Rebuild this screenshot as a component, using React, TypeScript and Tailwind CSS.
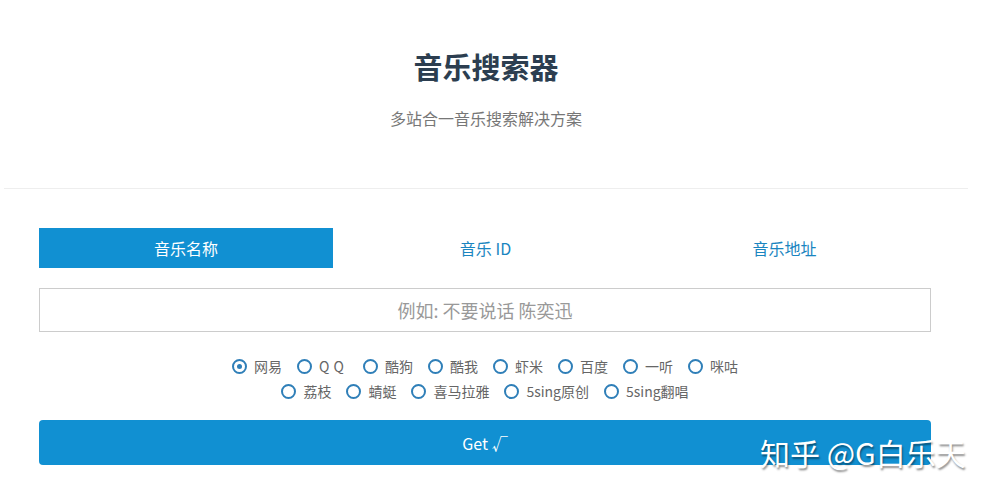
import { useState } from 'react'

const rowOne = ['网易', 'QQ', '酷狗', '酷我', '虾米', '百度', '一听', '咪咕']
const rowTwo = ['荔枝', '蜻蜓', '喜马拉雅', '5sing原创', '5sing翻唱']
const tabs = ['音乐名称', '音乐 ID', '音乐地址']

export default function App() {
  const [tab, setTab] = useState(0)
  const [site, setSite] = useState('网易')

  return (
    <div
      className="relative w-[993px] h-[496px] bg-white overflow-hidden"
      style={{ fontFamily: '"Microsoft YaHei", "Noto Sans CJK SC", "Noto Sans", sans-serif' }}
    >
      <div className="w-[972px] flex flex-col">
        {/* Header */}
        <div className="pt-[46px] flex flex-col items-center">
          <h1 className="text-[29px] leading-[40px] font-bold text-[#2c3e50]">音乐搜索器</h1>
          <p className="mt-[20px] text-[16px] leading-[24px] text-[#777]">多站合一音乐搜索解决方案</p>
        </div>

        <div className="mt-[58px] ml-[4px] w-[964px] h-px bg-[#eeeeee]" />

        <div className="ml-[39px] w-[892px] mt-[39px] flex flex-col">
          {/* Tabs */}
          <div className="grid grid-cols-[294px_1fr_1fr] h-[40px]">
            {tabs.map((t, i) => (
              <button
                key={t}
                onClick={() => setTab(i)}
                className={
                  i === tab
                    ? 'bg-[#1190d2] text-white text-[16px]'
                    : 'bg-white text-[#1a85c0] text-[16px] pl-[6px]'
                }
              >
                {t}
              </button>
            ))}
          </div>

          {/* Input */}
          <input
            className="mt-[20px] h-[44px] border border-[#cccccc] text-center text-[18px] text-[#555] placeholder:text-[#999] outline-none"
            placeholder="例如: 不要说话 陈奕迅"
          />

          {/* Sites */}
          <div className="mt-[22px] flex flex-col items-center">
            {[rowOne, rowTwo].map((row, r) => (
              <div key={r} className="h-[25px] flex items-center justify-center gap-[15px]">
                {row.map((s) => (
                  <label key={s} className="flex items-center gap-[7px] cursor-pointer" onClick={() => setSite(s)}>
                    <span className="w-[15px] h-[15px] rounded-full border-[2.5px] border-[#2f7fb8] flex items-center justify-center">
                      {site === s && <span className="w-[5px] h-[5px] rounded-full bg-[#2f7fb8]" />}
                    </span>
                    <span className={s === 'QQ' ? 'text-[14px] text-[#666] tracking-[4px]' : 'text-[14px] text-[#666]'}>
                      {s}
                    </span>
                  </label>
                ))}
              </div>
            ))}
          </div>

          {/* Submit */}
          <button className="mt-[16px] h-[45px] rounded-[4px] bg-[#1190d2] text-white text-[16px]">Get √</button>
        </div>
      </div>

      {/* Watermark */}
      <div
        className="absolute left-[760px] top-[432px] text-[30px] leading-[40px] text-white whitespace-nowrap"
        style={{ textShadow: '1px 2px 2px rgba(0,0,0,0.45)' }}
      >
        知乎 @G白乐天
      </div>
    </div>
  )
}
